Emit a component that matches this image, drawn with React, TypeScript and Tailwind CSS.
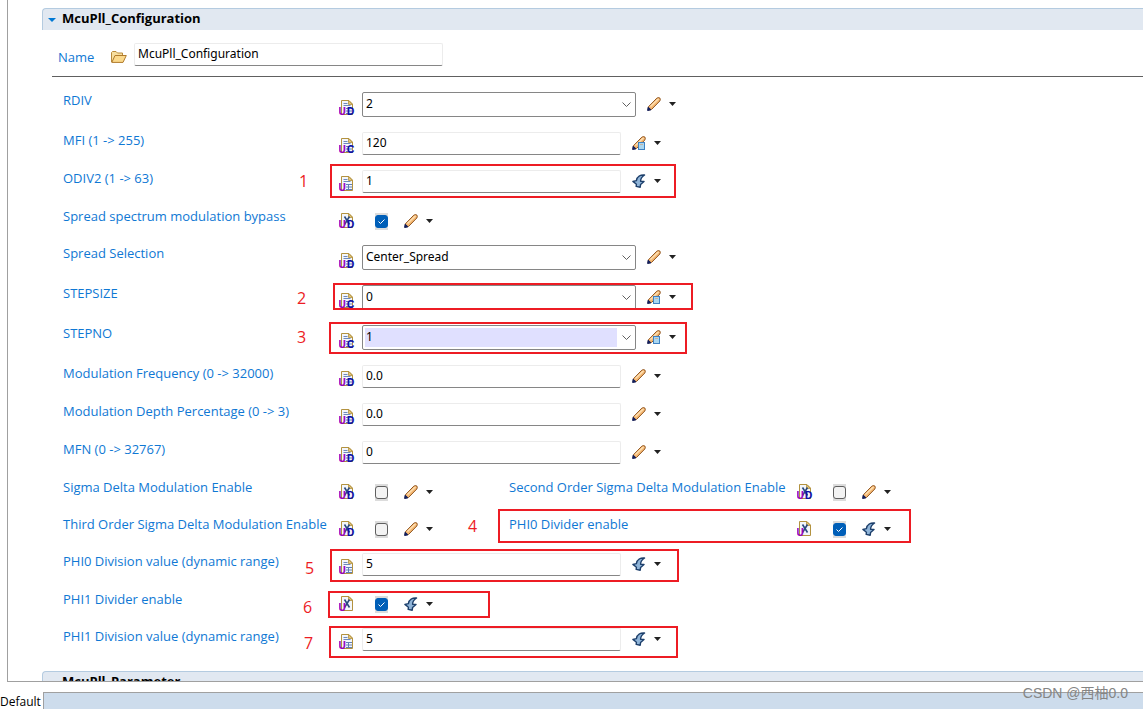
import React from 'react';
import clsx from 'clsx';

type Badge = 'D' | 'C' | '';
type Action = 'edit' | 'calc' | 'derive';

interface Field {
  id: string;
  label: string;
  kind: 'select' | 'text' | 'check';
  value?: string;
  checked?: boolean;
  active?: boolean;
  badge: Badge;
  action: Action;
}

const rows: Field[][] = [
  [{ id: 'rdiv', label: 'RDIV', kind: 'select', value: '2', badge: 'D', action: 'edit' }],
  [{ id: 'mfi', label: 'MFI (1 -> 255)', kind: 'text', value: '120', badge: 'C', action: 'calc' }],
  [{ id: 'odiv2', label: 'ODIV2 (1 -> 63)', kind: 'text', value: '1', badge: '', action: 'derive' }],
  [{ id: 'bypass', label: 'Spread spectrum modulation bypass', kind: 'check', checked: true, badge: 'D', action: 'edit' }],
  [{ id: 'spread', label: 'Spread Selection', kind: 'select', value: 'Center_Spread', badge: 'D', action: 'edit' }],
  [{ id: 'stepsize', label: 'STEPSIZE', kind: 'select', value: '0', badge: 'C', action: 'calc' }],
  [{ id: 'stepno', label: 'STEPNO', kind: 'select', value: '1', active: true, badge: 'C', action: 'calc' }],
  [{ id: 'modfreq', label: 'Modulation Frequency (0 -> 32000)', kind: 'text', value: '0.0', badge: 'D', action: 'edit' }],
  [{ id: 'moddepth', label: 'Modulation Depth Percentage (0 -> 3)', kind: 'text', value: '0.0', badge: 'D', action: 'edit' }],
  [{ id: 'mfn', label: 'MFN (0 -> 32767)', kind: 'text', value: '0', badge: 'D', action: 'edit' }],
  [
    { id: 'sigma1', label: 'Sigma Delta Modulation Enable', kind: 'check', badge: 'D', action: 'edit' },
    { id: 'sigma2', label: 'Second Order Sigma Delta Modulation Enable', kind: 'check', badge: 'D', action: 'edit' },
  ],
  [
    { id: 'sigma3', label: 'Third Order Sigma Delta Modulation Enable', kind: 'check', badge: 'D', action: 'edit' },
    { id: 'phi0en', label: 'PHI0 Divider enable', kind: 'check', checked: true, badge: '', action: 'derive' },
  ],
  [{ id: 'phi0div', label: 'PHI0 Division value (dynamic range)', kind: 'text', value: '5', badge: '', action: 'derive' }],
  [{ id: 'phi1en', label: 'PHI1 Divider enable', kind: 'check', checked: true, badge: '', action: 'derive' }],
  [{ id: 'phi1div', label: 'PHI1 Division value (dynamic range)', kind: 'text', value: '5', badge: '', action: 'derive' }],
];

// review marks drawn over the form
const marks = [
  { n: 1, num: 'left-[299px] top-[169px]', box: 'left-[330px] top-[164px] w-[346px] h-[34px]' },
  { n: 2, num: 'left-[297px] top-[286px]', box: 'left-[333px] top-[283px] w-[360px] h-[27px]' },
  { n: 3, num: 'left-[297px] top-[325px]', box: 'left-[329px] top-[322px] w-[358px] h-[32px]' },
  { n: 4, num: 'left-[468px] top-[514px]', box: 'left-[498px] top-[509px] w-[413px] h-[34px]' },
  { n: 5, num: 'left-[305px] top-[556px]', box: 'left-[330px] top-[549px] w-[349px] h-[33px]' },
  { n: 6, num: 'left-[303px] top-[595px]', box: 'left-[328px] top-[591px] w-[162px] h-[27px]' },
  { n: 7, num: 'left-[304px] top-[631px]', box: 'left-[329px] top-[626px] w-[349px] h-[32px]' },
];

const DocIcon = ({ badge, bool }: { badge: Badge; bool: boolean }) => (
  <svg viewBox="0 0 16 16" className="size-4 shrink-0" aria-hidden="true">
    <path d="M2.5 14.5V.5H10L13.5 4V14.5Z" fill="#f3f6fb" stroke="#b3923f" />
    <path d="M9.5 .5V4.5H13.5Z" fill="#e3c577" stroke="#b3923f" strokeWidth=".8" />
    {bool ? (
      <path d="M5.5 3.5L10.5 11.5M10.5 3.5L5.5 11.5" stroke="#2a4a80" strokeWidth="1.6" />
    ) : (
      <>
        <path d="M4.5 3.5H8.5M4.5 5.5H11.5" stroke="#6c88bd" />
        <path d="M7 8.5H13M7 11H13M7 13.5H13M9.5 8V14" stroke="#5f7fb8" />
      </>
    )}
    <text x="-.4" y="15" fontSize="10" fontWeight="bold" fill="#9400c0" stroke="#9400c0" strokeWidth=".2" fontFamily="Liberation Sans, sans-serif">U</text>
    {badge && (
      <text x="8" y="15" fontSize="10" fontWeight="bold" fill="#0c0ca8" stroke="#0c0ca8" strokeWidth=".2" fontFamily="Liberation Sans, sans-serif">{badge}</text>
    )}
  </svg>
);

const ActionIcon = ({ action }: { action: Action }) => (
  <svg viewBox="0 0 14 14" className="size-3.5" aria-hidden="true">
    {action === 'derive' ? (
      <path
        d="M12.6 1C8.5.6 5 2.6 4.4 6.6L.9 7.4L4.4 10.2L4.2 12.4L8.2 13.2L8.6 10.4L12 7.4L8.6 7.2C8.6 4.6 10 2.6 12.6 1Z"
        fill="#8fb4d8"
        stroke="#1d3f6b"
        strokeWidth="1.4"
        strokeLinejoin="round"
      />
    ) : (
      <>
        <path d="M1.4 9.8L9.8 1.2Q11.6 0 12.9 1.1Q13.8 2.4 12.8 4L4.6 12.4L1.2 13Z" fill="#f6b973" stroke="#8f5520" />
        <path d="M3.4 9.6L11.4 2" stroke="#fde0b4" strokeWidth="1.4" />
        <path d="M.6 13.5L1.2 10.2L4 12.8Z" fill="#14205c" stroke="#14205c" />
      </>
    )}
    {action === 'calc' && (
      <>
        <rect x="6.5" y="6.5" width="6" height="7" fill="#a9d6f0" stroke="#3f82c2" />
        <path d="M8 8.5H11" stroke="#c4b1a4" />
      </>
    )}
  </svg>
);

const Actions = ({ field }: { field: Field }) => (
  <div className="flex items-center gap-2">
    <button type="button" aria-label={`Edit ${field.label}`}>
      <ActionIcon action={field.action} />
    </button>
    <button type="button" aria-label={`Options for ${field.label}`}>
      <svg viewBox="0 0 7 4" className="h-1 w-[7px]" aria-hidden="true">
        <path d="M0 0H7L3.5 4Z" fill="#222" />
      </svg>
    </button>
  </div>
);

const valueText = "font-['Noto_Sans',sans-serif] text-xs text-black outline-none";
const textBox = 'h-[23px] rounded-xs border border-[#ececec] border-b-[#868686] bg-white px-[3px] pb-0.5';

const Control = ({ field }: { field: Field }) => {
  if (field.kind === 'check') {
    return (
      <div className="flex h-[17px] items-start">
        <DocIcon badge={field.badge} bool />
        <span className="ml-5 mr-4 grid h-[17px] place-items-center bg-[#dcdcdc]">
          <input
            id={field.id}
            type="checkbox"
            defaultChecked={field.checked}
            className="peer col-start-1 row-start-1 size-[13px] appearance-none rounded-[3px] border border-[#5f5f5f] bg-[#f3f3f3] checked:border-[#005fb8] checked:bg-[#005fb8]"
          />
          <svg viewBox="0 0 13 13" className="pointer-events-none invisible col-start-1 row-start-1 size-[13px] peer-checked:visible" aria-hidden="true">
            <path d="M3.5 6.5L5.5 8.5L9.5 4.5" fill="none" stroke="#fff" />
          </svg>
        </span>
        <div className="pt-px">
          <Actions field={field} />
        </div>
      </div>
    );
  }

  const isSelect = field.kind === 'select';
  return (
    <div className="flex items-start">
      <span className={clsx('mr-[7px]', isSelect ? 'pt-2' : 'pt-1.5')}>
        <DocIcon badge={field.badge} bool={false} />
      </span>
      {isSelect ? (
        <span className="flex h-[25px] w-[274px] items-center rounded-xs border border-[#868686] bg-white pl-0.5">
          <select
            id={field.id}
            defaultValue={field.value}
            className={clsx('h-[19px] w-[252px] appearance-none pb-0.5 pl-px leading-4', valueText, field.active && 'bg-[#e0e0ff]')}
          >
            <option>{field.value}</option>
          </select>
          <svg viewBox="0 0 9 6" className="ml-[5px] h-1.5 w-[9px]" aria-hidden="true">
            <path d="M.5 .5L4.5 4.5L8.5 .5" fill="none" stroke="#606060" />
          </svg>
        </span>
      ) : (
        <input id={field.id} type="text" defaultValue={field.value} className={clsx(textBox, valueText, 'w-[259px]')} />
      )}
      <span className={clsx('ml-[11px]', isSelect ? 'pt-[5px]' : 'pt-1')}>
        <Actions field={field} />
      </span>
    </div>
  );
};

const FieldCell = ({ field, wide }: { field: Field; wide: boolean }) => (
  <div className="flex items-start">
    <label
      htmlFor={field.id}
      className={clsx('shrink-0 whitespace-nowrap text-[13px] leading-5 text-[#0f78d4]', wide ? 'w-[288px]' : 'w-[276px]')}
    >
      {field.label}
    </label>
    <div className={field.kind === 'check' ? 'pt-[7px]' : 'pt-0.5'}>
      <Control field={field} />
    </div>
  </div>
);

const rowHeight = { select: 'h-10', text: 'h-[38px]', check: 'h-[37px]' };

const SectionHeader = ({ title }: { title: string }) => (
  <h2 className="ml-[34px] flex h-[22px] items-center gap-1.5 rounded-tl-sm border-l border-t border-[#b4cbe0] bg-[#e1e8f1] pl-[5px] text-[13px] leading-4 font-bold text-black">
    <svg viewBox="0 0 8 4" className="h-1 w-2" aria-hidden="true">
      <path d="M0 0H8L4 4Z" fill="#0078d4" />
    </svg>
    <span className="pb-1">{title}</span>
  </h2>
);

export default function App() {
  return (
    <div className="relative flex h-screen min-h-[709px] flex-col overflow-hidden bg-white font-['Open_Sans','Noto_Sans_CJK_SC',sans-serif]">
      <main className="ml-[7px] min-h-0 flex-1 overflow-hidden border-b border-l border-[#a0a0a0] pt-2">
        <section className="h-[663px]">
          <SectionHeader title="McuPll_Configuration" />
          <div className="ml-11 flex h-[47px] items-start border-b border-[#606060] pl-1.5 pt-[13px]">
            <label htmlFor="name" className="w-[53px] pt-1 text-[13px] leading-5 text-[#0f78d4]">Name</label>
            <span className="mr-[7px] pt-2">
              <svg viewBox="0 0 16 12" className="h-3 w-4" aria-hidden="true">
                <path d="M.5 11V1.5L1.5 .5H5L6.5 2H11.5V4.5" fill="#f7dfa0" stroke="#b98a3a" />
                <path d="M.8 11.4L4 4.5H15.3L12 11.4Z" fill="#fbd98c" stroke="#b07a2c" />
              </svg>
            </span>
            <input id="name" type="text" defaultValue="McuPll_Configuration" className={clsx(textBox, valueText, 'w-[309px]')} />
          </div>
          <form className="ml-[55px] pt-[13px]">
            {rows.map((row) => (
              <div key={row[0].id} className={clsx('flex', rowHeight[row[0].kind])}>
                {row.map((field, i) => (
                  <div key={field.id} className={i === 0 && row.length > 1 ? 'w-[446px]' : ''}>
                    <FieldCell field={field} wide={i > 0} />
                  </div>
                ))}
              </div>
            ))}
          </form>
        </section>
        <SectionHeader title="McuPll_Parameter" />
      </main>

      <footer className="flex h-[27px] shrink-0 items-end">
        <span className="w-[43px] text-xs leading-[14px] text-black">Default</span>
        <div className="h-[17px] flex-1 border-l border-t border-[#a0a0a0] bg-[#cddcec]" />
      </footer>

      {marks.map((mark) => (
        <React.Fragment key={mark.n}>
          <span className={clsx('pointer-events-none absolute text-base leading-6 text-[#ed1c24]', mark.num)}>{mark.n}</span>
          <span className={clsx('pointer-events-none absolute border-2 border-[#ed1c24]', mark.box)} />
        </React.Fragment>
      ))}
      <span className="pointer-events-none absolute bottom-1 right-[15px] font-['Liberation_Sans','Noto_Sans_CJK_SC',sans-serif] text-sm leading-6 text-[#858585]">
        CSDN @西柚0.0
      </span>
    </div>
  );
}
